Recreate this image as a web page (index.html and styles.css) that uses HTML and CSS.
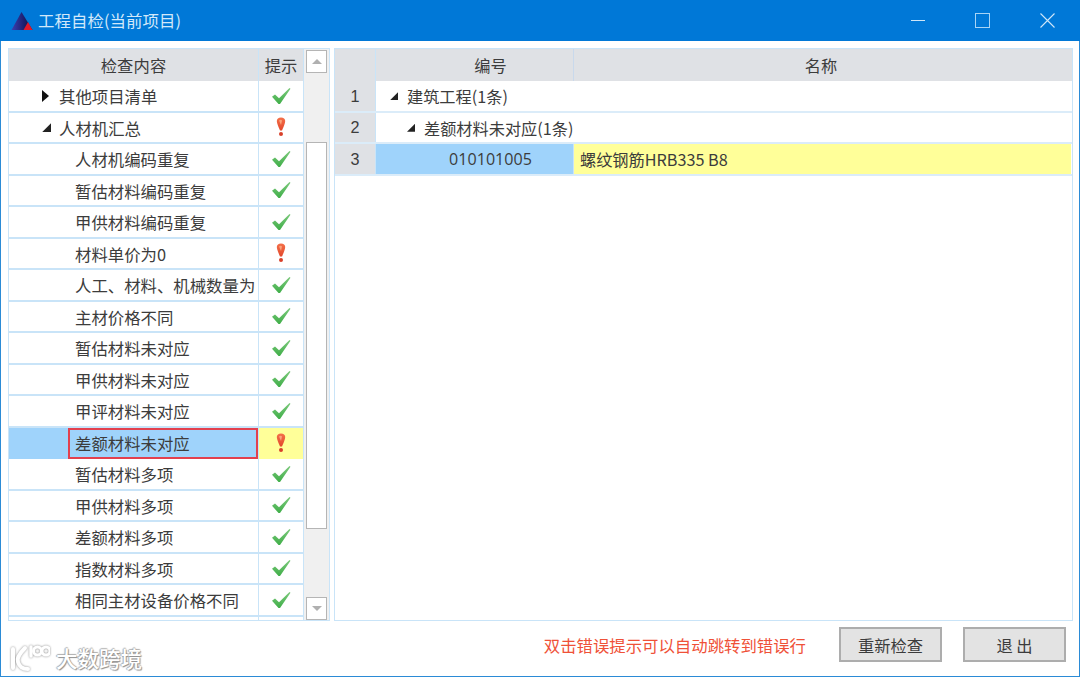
FILE: index.html
```html
<!DOCTYPE html>
<html lang="zh">
<head>
<meta charset="utf-8">
<title>工程自检(当前项目)</title>
<link rel="stylesheet" href="styles.css">
</head>
<body>
<svg class="defs" width="0" height="0">
  <defs>
    <linearGradient id="okg" x1="0" y1="0" x2="0" y2="1"><stop offset="0" stop-color="#7cc97c"/><stop offset="1" stop-color="#3fae48"/></linearGradient>
    <linearGradient id="wg" x1="0" y1="0" x2="0" y2="1"><stop offset="0" stop-color="#f4704a"/><stop offset="1" stop-color="#e2482c"/></linearGradient>
    <linearGradient id="lg" x1="0" y1="0" x2="1" y2="0"><stop offset="0" stop-color="#3a40b0"/><stop offset="0.6" stop-color="#1c1f6e"/><stop offset="1" stop-color="#141433"/></linearGradient>
  </defs>
  <symbol id="ok" viewBox="0 0 20 18"><path d="M1 9.8 L4 7.5 L8 11.3 L18.5 1 L19.5 1.8 L9 17 L7.5 17 Z" fill="url(#okg)"/></symbol>
  <symbol id="warn" viewBox="0 0 12 20"><path d="M1.8 4 Q2 0.5 6 0.5 Q10 0.5 10.2 4 Q10 7 7 13.5 L5 13.5 Q2 7 1.8 4 Z" fill="url(#wg)"/><circle cx="6" cy="17" r="2" fill="#d8402a"/><path d="M4 3.5 Q6 2 7 3.5 L6 8 Z" fill="#f9a47c"/></symbol>
</svg>
<div class="window">
  <header class="titlebar">
    <svg class="logo" width="22" height="20" viewBox="0 0 22 20"><path d="M10.5 1 L21.5 19 L0.5 19 Z" fill="url(#lg)"/><path d="M17 11 L21.5 19 L12.5 19 Z" fill="#e0182a"/></svg>
    <span class="title">工程自检(当前项目)</span>
    <div class="controls">
      <svg class="ctl min" width="14" height="14" viewBox="0 0 14 14"><path d="M0 6.5H14" stroke="#cfe6f8" stroke-width="1"/></svg>
      <svg class="ctl max" width="15" height="15" viewBox="0 0 15 15"><rect x="0.5" y="0.5" width="14" height="14" fill="none" stroke="#a8d4f5" stroke-width="1"/></svg>
      <svg class="ctl close" width="15" height="15" viewBox="0 0 15 15"><path d="M0.5 0.5L14.5 14.5M14.5 0.5L0.5 14.5" stroke="#cfe6f8" stroke-width="1.1"/></svg>
    </div>
  </header>
  <main class="content">
    <div class="panels">
      <section class="panel left">
        <div class="tree">
          <div class="row head"><div class="c-name">检查内容</div><div class="c-tip">提示</div></div>
          <div class="rows">
            <div class="row"><div class="c-name lv1"><i class="arrow closed"></i>其他项目清单</div><div class="c-tip"><svg class="i-ok"><use href="#ok"/></svg></div></div>
            <div class="row"><div class="c-name lv1"><i class="arrow open"></i>人材机汇总</div><div class="c-tip"><svg class="i-warn"><use href="#warn"/></svg></div></div>
            <div class="row"><div class="c-name lv2">人材机编码重复</div><div class="c-tip"><svg class="i-ok"><use href="#ok"/></svg></div></div>
            <div class="row"><div class="c-name lv2">暂估材料编码重复</div><div class="c-tip"><svg class="i-ok"><use href="#ok"/></svg></div></div>
            <div class="row"><div class="c-name lv2">甲供材料编码重复</div><div class="c-tip"><svg class="i-ok"><use href="#ok"/></svg></div></div>
            <div class="row"><div class="c-name lv2">材料单价为0</div><div class="c-tip"><svg class="i-warn"><use href="#warn"/></svg></div></div>
            <div class="row"><div class="c-name lv2">人工、材料、机械数量为</div><div class="c-tip"><svg class="i-ok"><use href="#ok"/></svg></div></div>
            <div class="row"><div class="c-name lv2">主材价格不同</div><div class="c-tip"><svg class="i-ok"><use href="#ok"/></svg></div></div>
            <div class="row"><div class="c-name lv2">暂估材料未对应</div><div class="c-tip"><svg class="i-ok"><use href="#ok"/></svg></div></div>
            <div class="row"><div class="c-name lv2">甲供材料未对应</div><div class="c-tip"><svg class="i-ok"><use href="#ok"/></svg></div></div>
            <div class="row"><div class="c-name lv2">甲评材料未对应</div><div class="c-tip"><svg class="i-ok"><use href="#ok"/></svg></div></div>
            <div class="row selected"><div class="c-name"><span class="focus">差额材料未对应</span></div><div class="c-tip"><svg class="i-warn"><use href="#warn"/></svg></div></div>
            <div class="row"><div class="c-name lv2">暂估材料多项</div><div class="c-tip"><svg class="i-ok"><use href="#ok"/></svg></div></div>
            <div class="row"><div class="c-name lv2">甲供材料多项</div><div class="c-tip"><svg class="i-ok"><use href="#ok"/></svg></div></div>
            <div class="row"><div class="c-name lv2">差额材料多项</div><div class="c-tip"><svg class="i-ok"><use href="#ok"/></svg></div></div>
            <div class="row"><div class="c-name lv2">指数材料多项</div><div class="c-tip"><svg class="i-ok"><use href="#ok"/></svg></div></div>
            <div class="row"><div class="c-name lv2">相同主材设备价格不同</div><div class="c-tip"><svg class="i-ok"><use href="#ok"/></svg></div></div>
            <div class="row"><div class="c-name"></div><div class="c-tip"></div></div>
          </div>
        </div>
        <div class="scrollbar">
          <div class="sb-btn"><i class="sb-up"></i></div>
          <div class="sb-track"><div class="sb-thumb"></div></div>
          <div class="sb-btn"><i class="sb-down"></i></div>
        </div>
      </section>
      <section class="panel right">
        <div class="grid-row head"><div class="g-num"></div><div class="g-code">编号</div><div class="g-desc">名称</div></div>
        <div class="grid-row"><div class="g-num">1</div><div class="g-span gl1"><i class="arrow open"></i>建筑工程(1条)</div></div>
        <div class="grid-row"><div class="g-num">2</div><div class="g-span gl2"><i class="arrow open"></i>差额材料未对应(1条)</div></div>
        <div class="grid-row"><div class="g-num">3</div><div class="g-code sel">010101005</div><div class="g-desc val">螺纹钢筋HRB335 B8</div></div>
      </section>
    </div>
    <footer class="footer">
      <span class="hint">双击错误提示可以自动跳转到错误行</span>
      <button class="btn">重新检查</button>
      <button class="btn">退 出</button>
    </footer>
  </main>
  <div class="watermark">
    <svg class="wm-logo" width="40" height="28" viewBox="0 0 40 28"><g fill="none" stroke-linecap="round"><path d="M3 5 V24 M15 4 Q6 13 8 18 Q10 25 18 25" stroke="#fff" stroke-width="4"/><path d="M21 3 V12" stroke="#fff" stroke-width="3.4"/><circle cx="27.5" cy="7" r="4" stroke="#fff" stroke-width="3"/><circle cx="36" cy="7" r="4" stroke="#fff" stroke-width="3"/></g></svg>
    <span class="wm-text">大数跨境</span>
  </div>
</div>
</body>
</html>
```
FILE: styles.css
```css
* { box-sizing: border-box; }
html, body { margin: 0; padding: 0; }
body {
  width: 1080px;
  height: 677px;
  overflow: hidden;
  background: #fff;
  font-family: "Noto Sans CJK SC", "Noto Sans", sans-serif;
  font-size: 16px;
  color: #3c3c3c;
}
.defs { position: absolute; }
.window {
  position: relative;
  width: 1080px;
  height: 677px;
  display: flex;
  flex-direction: column;
  border: 1px solid #2b8bd6;
  border-top: 0;
}
.titlebar {
  flex: 0 0 41px;
  margin: 0 -1px;
  background: #0078d7;
  display: flex;
  align-items: center;
  padding-left: 11px;
  color: #d2e8fa;
}
.logo { margin-right: 5px; }
.title { font-size: 16.4px; letter-spacing: 0.1px; margin-top: -2px; }
.controls {
  margin-left: auto;
  display: flex;
  align-items: center;
  padding-right: 25px;
}
.ctl { display: block; }
.min { margin-right: 50px; }
.max { margin-right: 50px; }
.content {
  flex: 1;
  display: flex;
  flex-direction: column;
  padding: 7px 7px 0 7px;
  min-height: 0;
}
.panels {
  flex: 0 0 573px;
  height: 573px;
  min-height: 0;
  display: flex;
  gap: 4px;
}
.panel {
  border: 1px solid #c9e4f8;
  background: #fff;
  min-height: 0;
}
.left {
  flex: 0 0 322px;
  display: flex;
  overflow: hidden;
}
.right { flex: 0 0 739px; }
.tree {
  flex: 0 0 295px;
  border-right: 1px solid #c9e4f8;
  display: flex;
  flex-direction: column;
  min-height: 0;
  overflow: hidden;
}
.rows {
  flex: 1;
  min-height: 0;
  overflow: hidden;
}
.row {
  display: flex;
  height: 31.5px;
  border-bottom: 2px solid #c9e4f8;
}
.row.head {
  flex: 0 0 32px;
  height: 32px;
  background: #dfe1e5;
  border-bottom: 0;
}
.c-name {
  flex: 0 0 250px;
  display: flex;
  align-items: center;
  white-space: nowrap;
  overflow: hidden;
  border-right: 1px solid #c9e4f8;
  font-size: 16.4px;
  padding-top: 1px;
}
.head .c-name, .head .c-tip { justify-content: center; font-size: 16.3px; padding-top: 0; }
.head .c-name { letter-spacing: 0.1px; }
.lv1 { padding-left: 33px; }
.lv2 { padding-left: 66px; }
.c-tip {
  flex: 1;
  display: flex;
  align-items: center;
  justify-content: center;
  white-space: nowrap;
}
.i-ok { width: 20px; height: 18px; }
.i-warn { width: 12px; height: 20px; }
.arrow {
  display: block;
  flex: none;
  width: 0;
  height: 0;
  margin-right: 10px;
}
.arrow.closed {
  border-left: 7px solid #111;
  border-top: 6.5px solid transparent;
  border-bottom: 6.5px solid transparent;
}
.arrow.open {
  width: 9px;
  height: 9px;
  margin-right: 8px;
  background: #222;
  clip-path: polygon(100% 0, 100% 100%, 0 100%);
}
.selected { border-bottom: 0; }
.selected .c-name {
  background: #9fd3fb;
  padding: 0 0 0 59px;
  align-items: stretch;
}
.focus {
  flex: 1;
  display: flex;
  align-items: center;
  padding-left: 5px;
  border: 2.5px solid #e2404e;
}
.selected .c-tip { background: #ffff99; }
.scrollbar {
  flex: 1;
  background: #f0f0f0;
  display: flex;
  flex-direction: column;
  padding: 1px 2px 0 2px;
}
.sb-btn {
  flex: 0 0 23px;
  background: #fff;
  border: 1px solid #b5b5b5;
  display: flex;
  align-items: center;
  justify-content: center;
}
.sb-track {
  flex: 1;
  min-height: 0;
  display: flex;
  flex-direction: column;
  padding: 69px 0 68px;
}
.sb-thumb {
  flex: 1;
  background: #fff;
  border: 1px solid #b5b5b5;
}
.sb-up, .sb-down { display: block; width: 0; height: 0; border-left: 5px solid transparent; border-right: 5px solid transparent; }
.sb-up { border-bottom: 5px solid #b0b0b0; }
.sb-down { border-top: 5px solid #b0b0b0; }
.grid-row {
  display: flex;
  height: 31.5px;
  border-bottom: 2px solid #dbecf9;
  font-size: 16.2px;
}
.grid-row.head {
  height: 32px;
  background: #dfe1e5;
  border-bottom: 0;
}
.g-num {
  flex: 0 0 41px;
  background: #dfe1e5;
  border-right: 1px solid #c9e4f8;
  display: flex;
  align-items: center;
  justify-content: center;
  font-family: "Liberation Sans", sans-serif;
  padding-top: 1px;
}
.g-code {
  flex: 0 0 198px;
  display: flex;
  align-items: center;
  justify-content: center;
  padding-left: 32px;
  border-right: 1px solid #c9d9ec;
}
.g-desc {
  flex: 1;
  display: flex;
  align-items: center;
  justify-content: center;
  padding-right: 4px;
}
.g-span {
  flex: 1;
  display: flex;
  align-items: center;
  white-space: nowrap;
  padding-top: 1px;
}
.gl1 { padding-left: 14px; }
.gl2 { padding-left: 31px; }
.g-span .arrow { width: 8px; height: 8px; margin-right: 9px; }
.sel { background: #9fd3fb; font-family: "Open Sans", sans-serif; font-size: 16.1px; border-right: 1px solid #c9e4f8; padding-top: 1px; }
.val { background: #ffff99; justify-content: flex-start; padding: 1px 0 0 6px; margin-right: 1px; }
.footer {
  flex: 1;
  display: flex;
  align-items: flex-start;
  padding-top: 6px;
  gap: 21px;
  padding-right: 6px;
}
.hint {
  margin-left: auto;
  margin-right: 12px;
  margin-top: 8px;
  color: #ef5138;
  font-size: 16.4px;
  line-height: 20px;
}
.btn {
  width: 103px;
  height: 35px;
  background: #e3e3e3;
  border: 2px solid #adadad;
  font-family: inherit;
  font-size: 16.3px;
  color: #3c3c3c;
  padding: 0;
}
.watermark {
  position: absolute;
  left: 9px;
  top: 642px;
  display: flex;
  align-items: center;
  gap: 6px;
}
.wm-logo { filter: drop-shadow(0 0 1px #8c8c8c); }
.wm-text {
  font-size: 21.5px;
  font-weight: 500;
  color: #fff;
  text-shadow: 1px 1px 1px #8f8f8f, -1px 0 1px #a8a8a8, 0 -1px 1px #b0b0b0;
}
```
